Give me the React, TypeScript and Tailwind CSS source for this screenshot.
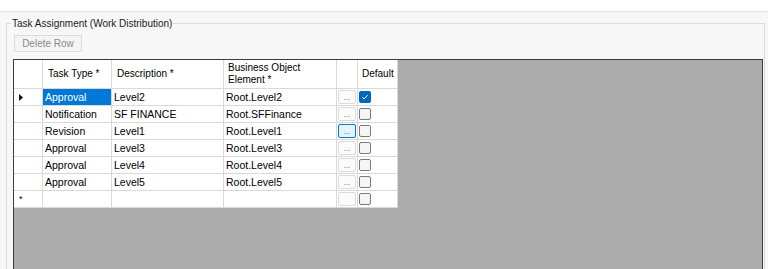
import React from "react";

type Row = {
  type: string;
  desc: string;
  el: string;
  checked?: boolean;
  current?: boolean;
  hover?: boolean;
};

const rows: Row[] = [
  { type: "Approval", desc: "Level2", el: "Root.Level2", checked: true, current: true },
  { type: "Notification", desc: "SF FINANCE", el: "Root.SFFinance" },
  { type: "Revision", desc: "Level1", el: "Root.Level1", hover: true },
  { type: "Approval", desc: "Level3", el: "Root.Level3" },
  { type: "Approval", desc: "Level4", el: "Root.Level4" },
  { type: "Approval", desc: "Level5", el: "Root.Level5" },
];

const cell = "h-full border-r border-[#d9d9d9] flex items-center";

function CheckBox({ checked }: { checked?: boolean }) {
  if (checked) {
    return (
      <span className="flex h-[12px] w-[12px] items-center justify-center rounded-[2px] bg-[#0067c0]">
        <svg width="8" height="8" viewBox="0 0 8 8">
          <path d="M1.4 4.3 L3.1 5.9 L6.7 2.1" fill="none" stroke="#ffffff" strokeWidth="1" />
        </svg>
      </span>
    );
  }
  return <span className="block h-[12px] w-[12px] rounded-[2px] border border-[#7a7a7a] bg-[#f5f5f5]" />;
}

function DotsButton({ hover, empty }: { hover?: boolean; empty?: boolean }) {
  return (
    <span
      className={
        "flex h-[14px] w-[18px] items-end justify-center rounded-[2px] border pb-[1px] text-[8px] leading-[8px] text-[#555] " +
        (hover ? "border-[#0078d7] bg-[#e5f1fb]" : "border-[#dadada] bg-[#fbfbfb]")
      }
    >
      {empty ? "" : "..."}
    </span>
  );
}

function DataRow({ row }: { row: Row }) {
  return (
    <div className="flex h-[17px] border-b border-[#d9d9d9] bg-white text-[10.5px] leading-[12px] text-black">
      <div className={cell + " w-[29px] pl-[5px]"}>
        {row.current && (
          <svg width="4" height="7" viewBox="0 0 4 7">
            <path d="M0 0 L4 3.5 L0 7 Z" fill="#111" />
          </svg>
        )}
      </div>
      <div className={cell + " w-[69px] pl-[2px] " + (row.current ? "bg-[#0078d7] text-white" : "")}>
        {row.type}
      </div>
      <div className={cell + " w-[112px] pl-[2px]"}>{row.desc}</div>
      <div className={cell + " w-[113px] pl-[2px]"}>{row.el}</div>
      <div className={cell + " w-[21px] pl-[1px]"}>
        <DotsButton hover={row.hover} />
      </div>
      <div className={cell + " w-[40px] pl-[1px]"}>
        <CheckBox checked={row.checked} />
      </div>
    </div>
  );
}

export default function App() {
  return (
    <div
      className="h-[269px] w-[768px] overflow-hidden bg-white"
      style={{ fontFamily: '"Liberation Sans", Arial, sans-serif' }}
    >
      <div className="h-[12px] border-b border-[#e4e4e4] bg-white" />
      <div className="h-[257px] bg-[#f7f7f7] pl-[6px] pr-[3px] pt-[4px]">
        {/* group box caption row: the top border is split around the caption */}
        <div className="flex h-[14px]">
          <div className="mt-[7px] h-[7px] w-[5px] border-l border-t border-[#dcdcdc]" />
          <span className="mt-[1px] px-[1px] text-[10px] leading-[14px] text-[#1a1a1a]">
            Task Assignment (Work Distribution)
          </span>
          <div className="mt-[7px] h-[7px] flex-1 border-r border-t border-[#dcdcdc]" />
        </div>
        <div className="h-[260px] border-x border-b border-[#dcdcdc]">
          <div className="pl-[7px] pt-[5px]">
            <button className="flex h-[17px] w-[68px] items-center justify-center border border-[#dcdcdc] bg-[#f4f4f4] text-[10px] text-[#8a8a8a]">
              Delete Row
            </button>
          </div>
          <div className="ml-[6px] mr-[1px] mt-[7px] h-[230px] border border-[#3c3c3c] bg-[#ababab]">
            <div className="w-[384px]">
              <div className="flex h-[29px] border-b border-[#d9d9d9] bg-white text-[10px] leading-[12px] text-black">
                <div className={cell + " w-[29px]"} />
                <div className={cell + " w-[69px] pl-[5px]"}>Task Type *</div>
                <div className={cell + " w-[112px] pl-[5px]"}>Description *</div>
                <div className={cell + " w-[113px] pl-[4px]"}>
                  Business Object
                  <br />
                  Element *
                </div>
                <div className={cell + " w-[21px]"} />
                <div className={cell + " w-[40px] pl-[4px]"}>Default</div>
              </div>
              {rows.map((r, i) => (
                <DataRow key={i} row={r} />
              ))}
              <div className="flex h-[17px] border-b border-[#d9d9d9] bg-white text-[10px] leading-[12px]">
                <div className={cell + " w-[29px] pl-[5px] text-[9px]"}>*</div>
                <div className={cell + " w-[69px]"} />
                <div className={cell + " w-[112px]"} />
                <div className={cell + " w-[113px]"} />
                <div className={cell + " w-[21px] pl-[1px]"}>
                  <DotsButton empty />
                </div>
                <div className={cell + " w-[40px] pl-[1px]"}>
                  <CheckBox />
                </div>
              </div>
            </div>
          </div>
        </div>
      </div>
    </div>
  );
}
